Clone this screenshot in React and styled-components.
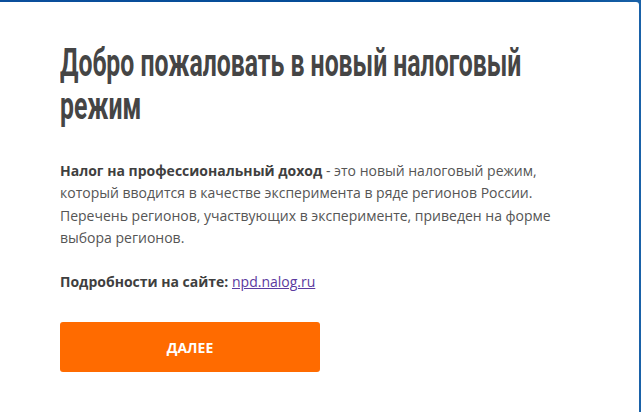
import React from "react"
import styled, { createGlobalStyle } from "styled-components"

const GlobalStyle = createGlobalStyle`
  html, body {
    margin: 0;
    padding: 0;
    background: #00509e;
  }
  body {
    font-family: "Open Sans", "DejaVu Sans", sans-serif;
  }
`

const TITLE_SCALE = 0.652

const Page = styled.div`
  width: 641px;
  height: 412px;
  overflow: hidden;
  background: linear-gradient(90deg, #0b4f9c 0%, #004a94 85%, #1a62a8 100%);
  padding: 2px 2px 0 0;
  box-sizing: border-box;
`

const Card = styled.div`
  background: #fff;
  height: 430px;
  border-radius: 0 3px 3px 0;
  padding: 40px 60px 0;
  box-sizing: border-box;
`

/* the original uses a condensed DIN face; none is installed, so squeeze Roboto */
const Title = styled.h1`
  margin: 0 0 32px;
  width: 740px;
  transform: scaleX(${TITLE_SCALE});
  transform-origin: left top;
  font-family: "Roboto", "Liberation Sans", sans-serif;
  font-weight: 700;
  font-size: 38px;
  line-height: 43px;
  color: #454545;
`

const Text = styled.p`
  margin: 0 0 22px;
  font-size: 14px;
  line-height: 22.3px;
  color: #555;
  max-width: 510px;
`

const Strong = styled.b`
  font-weight: 700;
  color: #3f3f3f;
`

const Link = styled.a`
  color: #5b3aa0;
  text-decoration: underline;
`

const Button = styled.button`
  display: block;
  margin-top: 29px;
  width: 260px;
  height: 50px;
  border: 0;
  border-radius: 3px;
  background: #ff6b00;
  color: #fff;
  font-family: "Open Sans", sans-serif;
  font-weight: 700;
  font-size: 14px;
  cursor: pointer;
`

export default function App() {
  return (
    <>
      <GlobalStyle />
      <Page>
        <Card>
          <Title>Добро пожаловать в новый налоговый режим</Title>
          <Text>
            <Strong>Налог на профессиональный доход</Strong> - это новый налоговый режим,
            который вводится в качестве эксперимента в ряде регионов России.
            Перечень регионов, участвующих в эксперименте, приведен на форме
            выбора регионов.
          </Text>
          <Text>
            <Strong>Подробности на сайте:</Strong> <Link href="#">npd.nalog.ru</Link>
          </Text>
          <Button>ДАЛЕЕ</Button>
        </Card>
      </Page>
    </>
  )
}
